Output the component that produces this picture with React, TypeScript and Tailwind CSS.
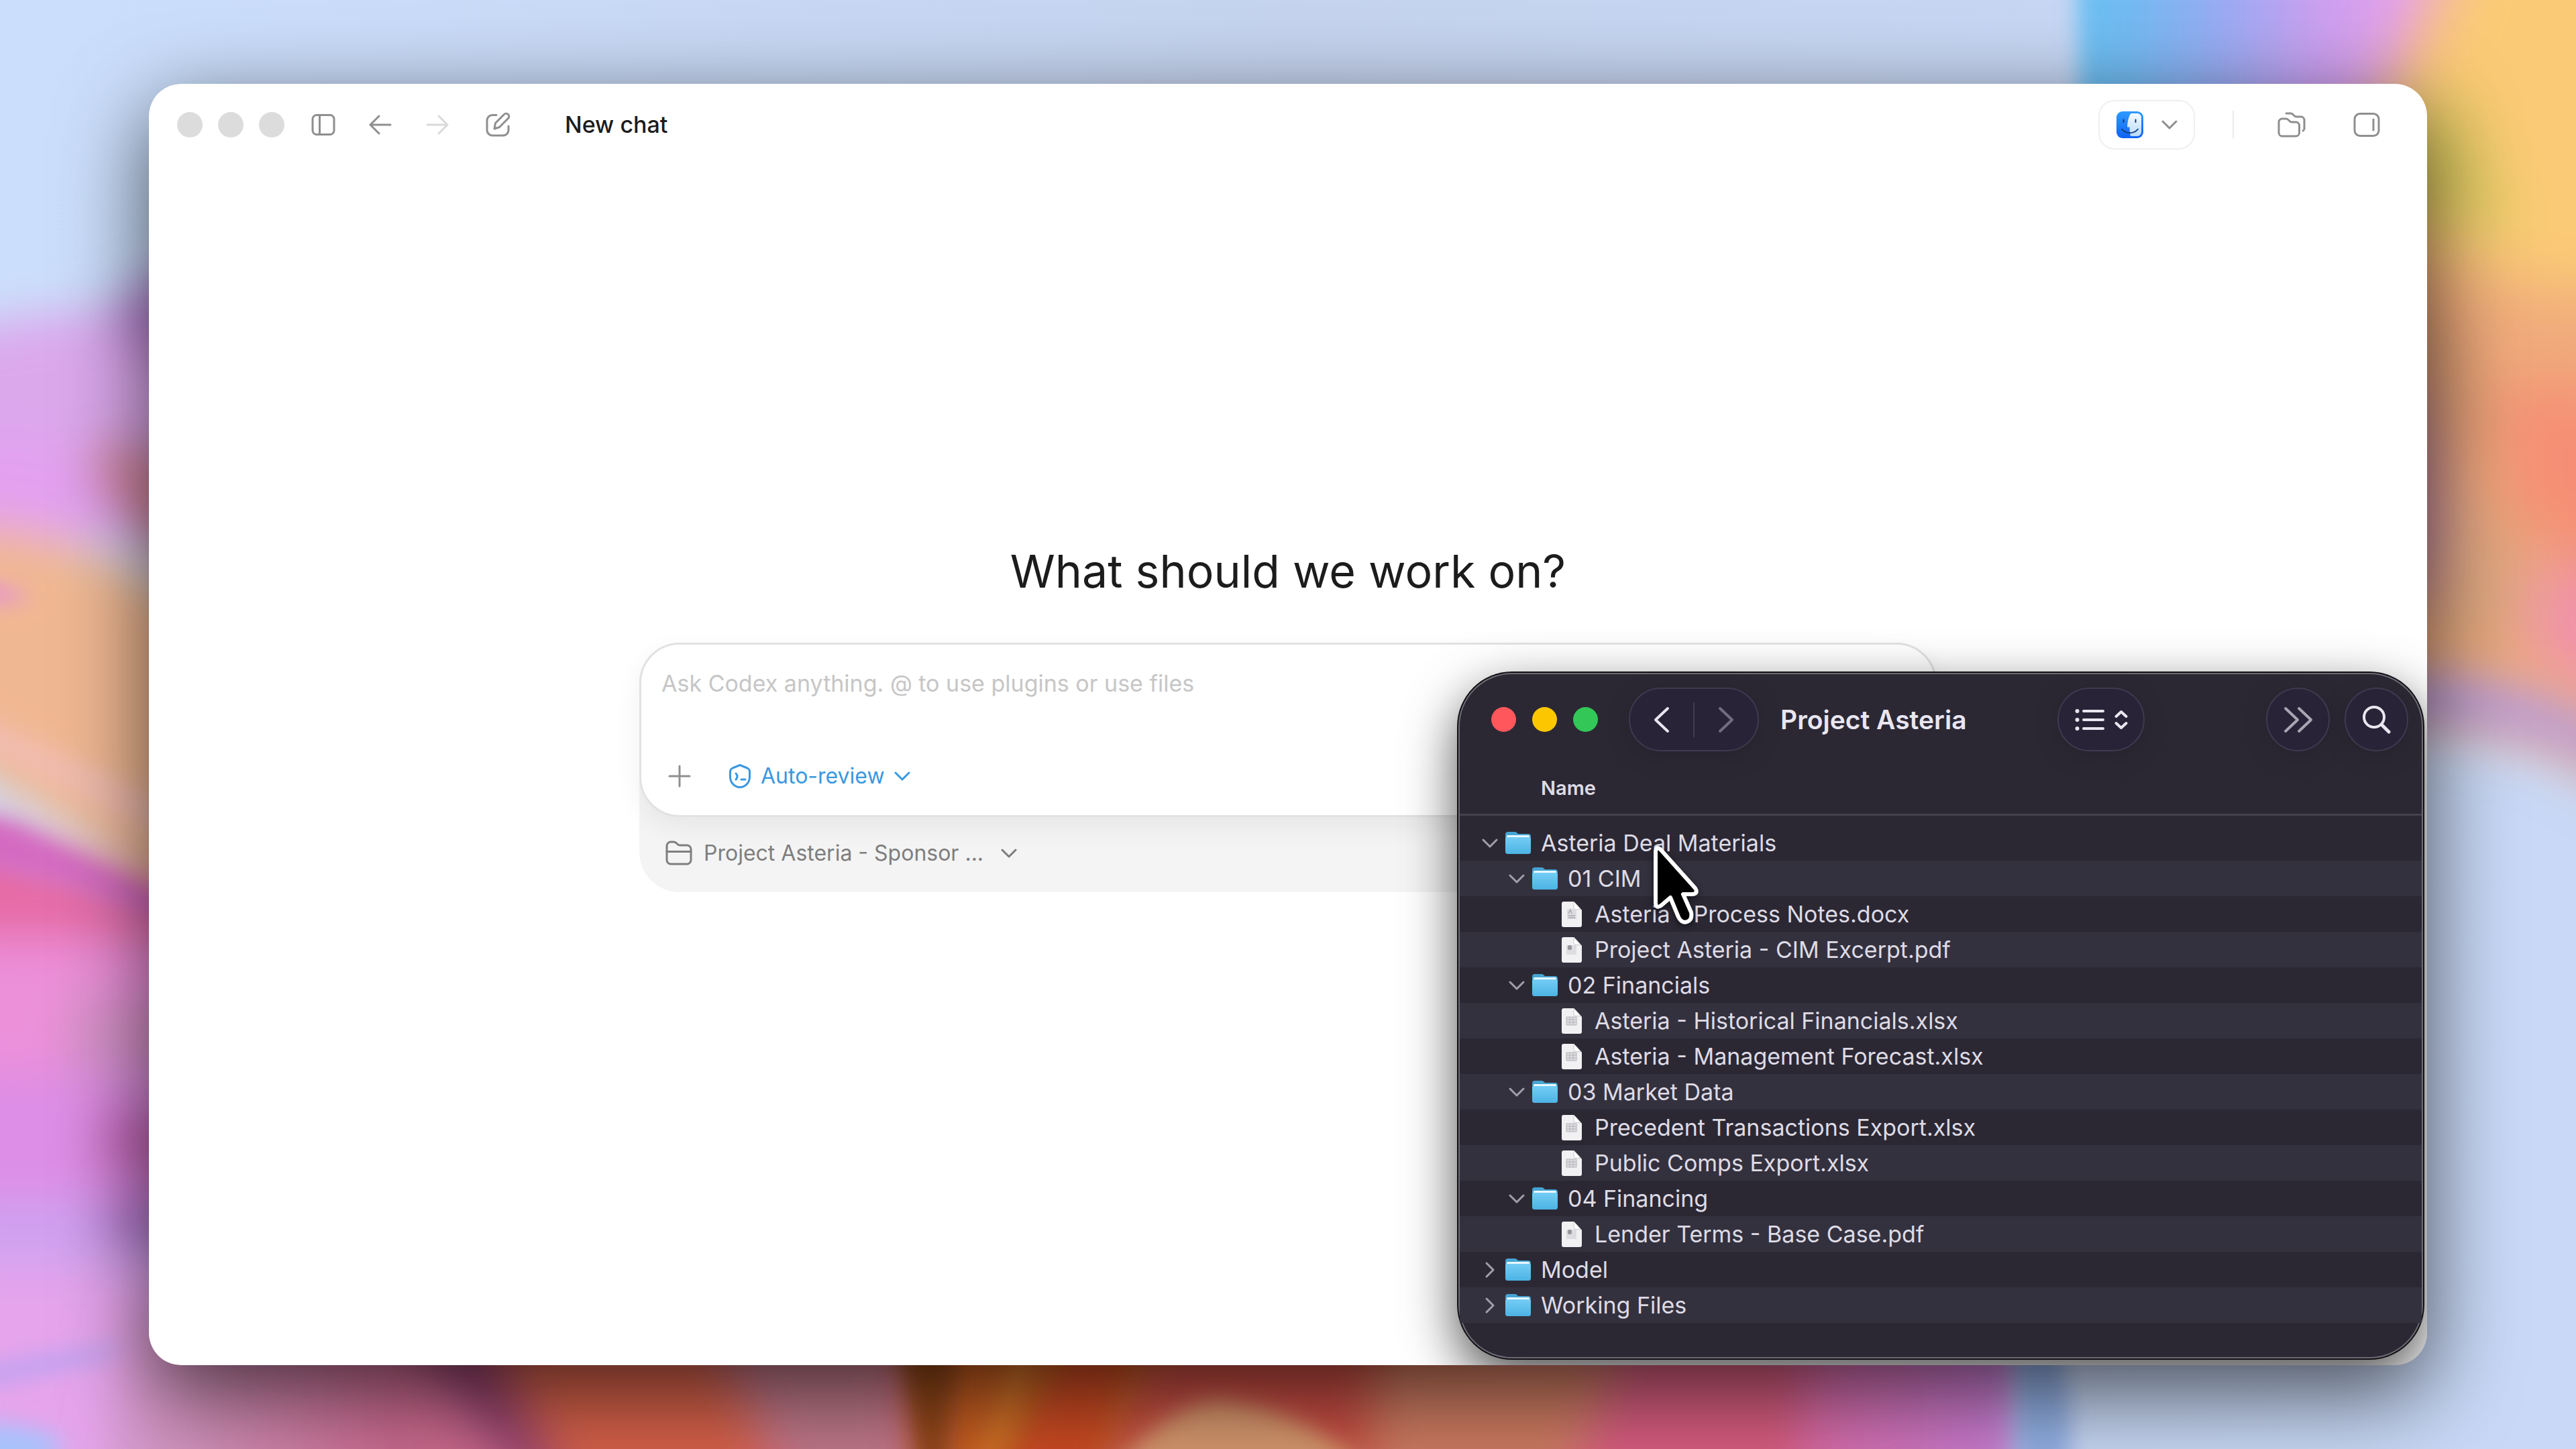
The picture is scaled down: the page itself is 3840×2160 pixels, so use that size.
import { useState } from 'react';
import type { ReactNode } from 'react';

type RowKind = 'folder' | 'doc' | 'pdf' | 'sheet';

interface FileRow {
  name: string;
  kind: RowKind;
  level: 0 | 1 | 2;
  open?: boolean;
}

const rows: FileRow[] = [
  { name: 'Asteria Deal Materials', kind: 'folder', level: 0, open: true },
  { name: '01 CIM', kind: 'folder', level: 1, open: true },
  { name: 'Asteria - Process Notes.docx', kind: 'doc', level: 2 },
  { name: 'Project Asteria - CIM Excerpt.pdf', kind: 'pdf', level: 2 },
  { name: '02 Financials', kind: 'folder', level: 1, open: true },
  { name: 'Asteria - Historical Financials.xlsx', kind: 'sheet', level: 2 },
  { name: 'Asteria - Management Forecast.xlsx', kind: 'sheet', level: 2 },
  { name: '03 Market Data', kind: 'folder', level: 1, open: true },
  { name: 'Precedent Transactions Export.xlsx', kind: 'sheet', level: 2 },
  { name: 'Public Comps Export.xlsx', kind: 'sheet', level: 2 },
  { name: '04 Financing', kind: 'folder', level: 1, open: true },
  { name: 'Lender Terms - Base Case.pdf', kind: 'pdf', level: 2 },
  { name: 'Model', kind: 'folder', level: 0, open: false },
  { name: 'Working Files', kind: 'folder', level: 0, open: false },
];

const indent = ['pl-[25px]', 'pl-[65px]', 'pl-[105px]'];

const Wallpaper = () => (
  <svg
    className="absolute inset-0 h-full w-full"
    viewBox="0 0 3840 2160"
    preserveAspectRatio="none"
    aria-hidden="true"
  >
    <defs>
      <filter id="soft" x="-20%" y="-20%" width="140%" height="140%">
        <feGaussianBlur stdDeviation="16" />
      </filter>
      <filter id="softer" x="-30%" y="-30%" width="160%" height="160%">
        <feGaussianBlur stdDeviation="34" />
      </filter>
      <filter id="softest" x="-50%" y="-30%" width="200%" height="160%">
        <feGaussianBlur stdDeviation="44" />
      </filter>
      <linearGradient id="sky" x1="0" y1="0" x2="1" y2="0">
        <stop offset="0" stopColor="#cbdffc" />
        <stop offset="0.5" stopColor="#c5d3ee" />
        <stop offset="1" stopColor="#c8d8f6" />
      </linearGradient>
      <linearGradient id="topPetal" gradientUnits="userSpaceOnUse" x1="3090" y1="0" x2="3640" y2="0">
        <stop offset="0" stopColor="#69c0f2" />
        <stop offset="0.15" stopColor="#72baf2" />
        <stop offset="0.4" stopColor="#98abf3" />
        <stop offset="0.65" stopColor="#c8a0f0" />
        <stop offset="0.9" stopColor="#e4a0ec" />
        <stop offset="1" stopColor="#e8a8dc" />
      </linearGradient>
      <linearGradient id="bottomPetals" gradientUnits="userSpaceOnUse" x1="60" y1="0" x2="3010" y2="0">
        <stop offset="0" stopColor="#dca4e6" />
        <stop offset="0.08" stopColor="#cf90b8" />
        <stop offset="0.18" stopColor="#c8688c" />
        <stop offset="0.7" stopColor="#d86c72" />
        <stop offset="0.88" stopColor="#d868a0" />
        <stop offset="1" stopColor="#c47cd4" />
      </linearGradient>
    </defs>
    <rect width="3840" height="2160" fill="url(#sky)" />

    {/* Left petals */}
    <g filter="url(#softer)">
      <path d="M-80 500 Q100 440 400 480 V800 H-80Z" fill="#dba8ec" />
      <path d="M170 460 Q220 400 400 380 V640 Q260 560 150 470Z" fill="#b880d2" />
      <path d="M-80 650 L60 650 L220 740 V800 H-80Z" fill="#e3a0f0" />
      <path d="M-80 790 Q120 750 400 1000 V1420 L-80 1120Z" fill="#f0b892" />
      <path d="M150 660 Q260 650 400 760 V960 Q260 860 130 700Z" fill="#d4869a" />
      <path d="M-80 1220 L400 1370 V1480 L-80 1480Z" fill="#e66aa4" />
      <path d="M-80 1400 H400 V1640 H-80Z" fill="#ec90da" />
      <path d="M100 1480 L400 1530 V1640 L100 1600Z" fill="#d692c8" />
      <path d="M-80 1600 H400 V1800 H-80Z" fill="#dd8ee6" />
      <path d="M150 1650 H400 V1800 L140 1740Z" fill="#c568b8" />
      <path d="M-80 1790 H400 V1900 H-80Z" fill="#cfa2f0" />
      <path d="M150 1790 H400 V1850 H150Z" fill="#aa70c4" />
      <path d="M-80 1890 H300 V2220 H-80Z" fill="#e6a4ec" />
    </g>
    <g filter="url(#soft)">
      <path d="M-40 868 Q10 874 50 892 Q0 900 -40 896Z" fill="#e58ce0" />
      <path d="M-40 1060 L260 1200 L260 1260 L-40 1110Z" fill="#f1bcae" />
      <path d="M-40 1215 L20 1225 L260 1345 L260 1380 L100 1320 L-40 1290Z" fill="#d46ac2" />
    </g>

    {/* Bottom petals */}
    <g filter="url(#softer)">
      <path d="M200 1960 H3020 V2260 H140Z" fill="url(#bottomPetals)" />
      <path d="M600 1980 L740 1980 L880 2240 L800 2240Z" fill="#8c3e6c" />
      <path d="M720 1980 H1100 L1160 2240 H860Z" fill="#d46048" />
      <path d="M1060 1980 H1330 L1360 2240 H1200Z" fill="#bd7788" />
      <path d="M1350 1960 H1760 L1660 2240 H1380Z" fill="#c45c24" />
      <path d="M1740 1960 H2200 L2100 2240 H1620Z" fill="#c44c42" />
      <path d="M2060 2000 H2460 L2330 2240 H2040Z" fill="#cc7a60" />
      <path d="M2440 1960 H2700 L2680 2240 H2320Z" fill="#d65c7e" />
    </g>
    <g filter="url(#soft)">
      <path d="M-40 2040 Q60 2020 190 2000 L150 2030 L-40 2070Z" fill="#bda2f0" />
      <path d="M-40 2120 Q40 2120 100 2150 L60 2190 H-40Z" fill="#a8c2fc" />
      <path d="M1340 1980 H1430 L1410 2200 H1370Z" fill="#8e4418" />
      <path d="M1520 1980 L1560 1980 L1480 2200 H1450Z" fill="#cf7228" />
      <path d="M1610 1980 H1700 L1620 2200 H1500Z" fill="#c84a20" />
      <path d="M1650 2200 Q1760 2070 1840 2090 Q1960 2110 2050 2200Z" fill="#d3966c" />
      <path d="M3005 1980 H3060 Q3100 2100 3080 2200 H3005Z" fill="#90aee2" />
    </g>

    {/* Right petals */}
    <g filter="url(#soft)">
      <path d="M3095 -60 H3700 V300 H3105Z" fill="url(#topPetal)" />
    </g>
    <g filter="url(#softest)">
      <path d="M3620 -120 H3960 V1210 Q3800 1060 3500 1070 V340 Q3500 180 3660 -40Z" fill="#f0ab7c" />
      <path d="M3680 -120 H3960 V420 Q3760 460 3560 340 V200Z" fill="#fbca76" />
      <path d="M3540 200 Q3620 90 3690 190 L3750 350 L3540 330Z" fill="#dcca60" />
      <path d="M3540 420 Q3680 430 3700 640 L3640 760 H3540Z" fill="#d49870" />
      <path d="M3500 500 Q3640 560 3640 900 H3500Z" fill="#bd80a4" />
      <path d="M3720 580 Q3860 540 3960 640 V900 L3740 780Z" fill="#f58e74" />
      <path d="M3640 740 Q3740 720 3780 860 L3740 980 H3600Z" fill="#dea77e" />
      <path d="M3770 860 L3960 840 V1080 L3780 980Z" fill="#f190ac" />
    </g>
    <g filter="url(#softer)">
      <path d="M3500 1010 Q3740 980 3940 1120 V1180 Q3760 1050 3500 1080Z" fill="#b497de" />
    </g>
  </svg>
);

const ChevronDown = ({ className }: { className: string }) => (
  <svg className={className} viewBox="0 0 24 14" fill="none" stroke="currentColor" strokeWidth="3" strokeLinecap="round" strokeLinejoin="round" aria-hidden="true">
    <path d="M2 2l10 10L22 2" />
  </svg>
);

const ChevronRight = ({ className }: { className: string }) => (
  <svg className={className} viewBox="0 0 14 24" fill="none" stroke="currentColor" strokeWidth="3" strokeLinecap="round" strokeLinejoin="round" aria-hidden="true">
    <path d="M2 2l10 10L2 22" />
  </svg>
);

const FolderIcon = () => (
  <svg className="h-[34px] w-[38px]" viewBox="0 0 38 34" aria-hidden="true">
    <defs>
      <linearGradient id="folderFront" x1="0" y1="0" x2="0" y2="1">
        <stop offset="0" stopColor="#74cdf5" />
        <stop offset="1" stopColor="#4cb3e4" />
      </linearGradient>
    </defs>
    <path d="M0 4a4 4 0 0 1 4-4h10c1.500 0 2.500.6 3.500 1.600L19 3h15a4 4 0 0 1 4 4v22a4 4 0 0 1-4 4H4a4 4 0 0 1-4-4z" fill="#46a5d3" />
    <rect x="2" y="5" width="34" height="6" rx="1.500" fill="#e8f8ff" />
    <path d="M0 10.500C0 9 1 8 2.500 8h33C37 8 38 9 38 10.500V29a4 4 0 0 1-4 4H4a4 4 0 0 1-4-4z" fill="url(#folderFront)" />
  </svg>
);

const FileIcon = ({ kind }: { kind: RowKind }) => (
  <svg className="h-[38px] w-[30px]" viewBox="0 0 30 38" aria-hidden="true">
    <path d="M0 3a3 3 0 0 1 3-3h15l12 13v22a3 3 0 0 1-3 3H3a3 3 0 0 1-3-3z" fill="#f1f0f2" />
    <path d="M18 0l12 13c-1-1-2-1.500-4-1.500h-5a3 3 0 0 1-3-3z" fill="#fff" stroke="#c9c8cc" strokeWidth="1" />
    {kind === 'sheet' && (
      <path d="M7 13h15v12H7zM7 17h15M7 21h15M12 13v12M17 13v12" fill="#dedde0" stroke="#b4b3b8" strokeWidth="1" />
    )}
    {kind === 'pdf' && (
      <>
        <rect x="7" y="12" width="15" height="14" fill="#dddce0" />
        <rect x="9" y="12" width="6" height="7" rx="2" fill="#98979c" />
      </>
    )}
    {kind === 'doc' && (
      <>
        <rect x="8" y="11" width="14" height="15" fill="#dddce0" />
        <path d="M10 18l3-6 2 6M10 21h10M10 24h10" fill="none" stroke="#a9a8ad" strokeWidth="1.500" />
      </>
    )}
  </svg>
);

const FinderFace = () => (
  <svg className="h-[40px] w-[40px]" viewBox="0 0 40 40" aria-hidden="true">
    <defs>
      <linearGradient id="faceDark" x1="0" y1="0" x2="0" y2="1">
        <stop offset="0" stopColor="#2f9bff" />
        <stop offset="1" stopColor="#0f62f5" />
      </linearGradient>
      <linearGradient id="faceLight" x1="0" y1="0" x2="0" y2="1">
        <stop offset="0" stopColor="#f6fbff" />
        <stop offset="1" stopColor="#b9d9fb" />
      </linearGradient>
    </defs>
    <rect width="40" height="40" rx="9" fill="url(#faceDark)" />
    <path d="M21.500 3H31a6 6 0 0 1 6 6v22a6 6 0 0 1-6 6H21c-1-4-1.500-8-1.500-13.500H16C16.500 15 18 8 21.500 3z" fill="url(#faceLight)" />
    <path d="M10.500 12.500v3.500M28.500 12.500v3.500" stroke="#12386e" strokeWidth="2" strokeLinecap="round" />
    <path d="M8 26.500c6 7.500 18 7.500 24 0" fill="none" stroke="#12386e" strokeWidth="1.800" strokeLinecap="round" />
  </svg>
);

const Cursor = () => (
  <svg
    className="pointer-events-none absolute top-[252px] left-[280px] h-[130px] w-[90px] drop-shadow-[0_4px_5px_rgba(0,0,0,0.5)]"
    viewBox="0 0 90 130"
    aria-hidden="true"
  >
    <path
      d="M12 12V88q0 10 8 5l14-12 12 29q5 10 13 7t6-14L53 76h14q9-1 4-9L19 9q-6-5-7 3z"
      fill="#000"
      stroke="#fff"
      strokeWidth="6"
      strokeLinejoin="round"
    />
  </svg>
);

const IconButton = ({ label, children }: { label: string; children: ReactNode }) => (
  <button type="button" aria-label={label} className="flex h-[60px] w-[60px] items-center justify-center">
    {children}
  </button>
);

const TitleBar = () => (
  <header className="flex h-[122px] shrink-0 items-center pr-[60px] pl-[42px] text-[#8f8f8f]">
    <div className="flex gap-[23px]">
      <button type="button" aria-label="Close" className="h-[38px] w-[38px] rounded-full bg-[#dcdcdc]" />
      <button type="button" aria-label="Minimize" className="h-[38px] w-[38px] rounded-full bg-[#dcdcdc]" />
      <button type="button" aria-label="Zoom" className="h-[38px] w-[38px] rounded-full bg-[#dcdcdc]" />
    </div>
    <nav className="ml-[28px] flex gap-[25px]">
      <IconButton label="Toggle sidebar">
        <svg className="h-[36px] w-[36px]" viewBox="0 0 36 36" fill="none" stroke="currentColor" strokeWidth="3">
          <rect x="2" y="3.500" width="32" height="29" rx="6" />
          <path d="M12.500 4v28" />
        </svg>
      </IconButton>
      <IconButton label="Back">
        <svg className="h-[32px] w-[34px]" viewBox="0 0 34 32" fill="none" stroke="currentColor" strokeWidth="3" strokeLinecap="round" strokeLinejoin="round">
          <path d="M15 3L2 16l13 13M2 16h30" />
        </svg>
      </IconButton>
      <IconButton label="Forward">
        <svg className="h-[32px] w-[34px] text-[#dadada]" viewBox="0 0 34 32" fill="none" stroke="currentColor" strokeWidth="3" strokeLinecap="round" strokeLinejoin="round">
          <path d="M19 3l13 13-13 13M32 16H2" />
        </svg>
      </IconButton>
    </nav>
    <div className="ml-[30px] flex items-center gap-[70px]">
      <IconButton label="New chat">
        <svg className="h-[38px] w-[38px]" viewBox="0 0 38 38" fill="none" stroke="currentColor" strokeWidth="3" strokeLinecap="round" strokeLinejoin="round">
          <path d="M17 4.500h-6a8 8 0 0 0-8 8V27a8 8 0 0 0 8 8h16a8 8 0 0 0 8-8v-6" />
          <path d="M14 25l1.500-8.500L28.500 3.500a4.200 4.200 0 0 1 6 6L21.500 22.500z" />
        </svg>
      </IconButton>
      <h1 className="text-[34px] leading-[44px] font-medium text-[#1c1c1c]">New chat</h1>
    </div>
    <button
      type="button"
      aria-label="Open in Finder"
      className="ml-auto flex h-[74px] w-[144px] items-center justify-center gap-[27px] rounded-[24px] border-[2px] border-[#efefef]"
    >
      <FinderFace />
      <ChevronDown className="h-[14px] w-[24px]" />
    </button>
    <div className="mx-[56px] h-[42px] w-[2px] bg-[#ececec]" />
    <div className="flex gap-[52px]">
      <IconButton label="Open files">
        <svg className="h-[40px] w-[44px]" viewBox="0 0 44 40" fill="none" stroke="currentColor" strokeWidth="3" strokeLinecap="round" strokeLinejoin="round">
          <path d="M3 16a5 5 0 0 1 5-5h5.500c1.500 0 2.500.5 3.500 1.500l2 2c1 1 1.500 1.500 3 1.500h6.500a5 5 0 0 1 5 5v11a5 5 0 0 1-5 5H8a5 5 0 0 1-5-5z" />
          <path d="M14 3h6.500c1.500 0 2.500.5 3.500 1.500l2 2c1 1 1.500 1.500 3 1.500h7a5 5 0 0 1 5 5v13a5 5 0 0 1-2 3" />
        </svg>
      </IconButton>
      <IconButton label="Toggle side panel">
        <svg className="h-[40px] w-[40px]" viewBox="0 0 40 40" fill="none" stroke="currentColor" strokeWidth="3" strokeLinecap="round">
          <rect x="2" y="3.500" width="36" height="33" rx="8" />
          <path d="M30 12v16" />
        </svg>
      </IconButton>
    </div>
  </header>
);

const Composer = () => {
  const [prompt, setPrompt] = useState('');

  return (
    <div className="w-full max-w-[1934px] rounded-[60px] bg-[#f4f4f4]">
      <form className="flex flex-col rounded-[60px] border-[3px] border-[#e2e2e2] bg-white px-[30px] pt-[36px] pb-[28px] shadow-[0_14px_40px_rgba(0,0,0,0.06)]">
        <textarea
          aria-label="Message"
          rows={2}
          value={prompt}
          onChange={(e) => setPrompt(e.target.value)}
          placeholder="Ask Codex anything. @ to use plugins or use files"
          className="h-[130px] w-full resize-none text-[34px] leading-[44px] text-[#1c1c1c] outline-none placeholder:text-[#c6c6c6]"
        />
        <div className="flex h-[60px] items-center gap-[46px]">
          <button type="button" aria-label="Add attachment" className="flex h-[60px] w-[54px] items-center justify-center text-[#8f8f8f]">
            <svg className="h-[34px] w-[34px]" viewBox="0 0 34 34" fill="none" stroke="currentColor" strokeWidth="3" strokeLinecap="round">
              <path d="M17 2v30M2 17h30" />
            </svg>
          </button>
          <button type="button" className="flex items-center gap-[14px] text-[32px] leading-[44px] text-[#3a98e0]">
            <svg className="h-[38px] w-[34px]" viewBox="0 0 34 38" fill="none" stroke="currentColor" strokeWidth="3" strokeLinecap="round" strokeLinejoin="round" aria-hidden="true">
              <path d="M17 2.500l11 4.500c2 1 3.500 2.500 3.500 5v8c0 9-7 15.500-14.500 15.500S2.500 29 2.500 20v-8c0-2.500 1.500-4 3.500-5z" />
              <path d="M11 15c2.500 2.500 2.500 6 0 9M19 24h6" />
            </svg>
            Auto-review
            <ChevronDown className="h-[14px] w-[24px]" />
          </button>
        </div>
      </form>
      <div className="flex h-[112px] items-center px-[38px] pb-[4px]">
        <button type="button" className="flex items-center gap-[16px] text-[32px] leading-[44px] text-[#7e7e7e]">
          <svg className="h-[38px] w-[42px]" viewBox="0 0 42 38" fill="none" stroke="currentColor" strokeWidth="3" strokeLinecap="round" strokeLinejoin="round" aria-hidden="true">
            <path d="M3 8a6 6 0 0 1 6-6h4c2 0 3 .5 4.500 2l1.500 1.500c1 1 2 1.500 3.500 1.500H33a6 6 0 0 1 6 6v16a6 6 0 0 1-6 6H9a6 6 0 0 1-6-6z" />
            <path d="M3 16.500h36" />
          </svg>
          Project Asteria - Sponsor ...
          <ChevronDown className="ml-[10px] h-[14px] w-[24px]" />
        </button>
      </div>
    </div>
  );
};

const FinderToolbar = () => (
  <div className="flex h-[136px] items-center pr-[20px] pl-[47px] text-[#e9e6f0]">
    <div className="flex gap-[24px]">
      <button type="button" aria-label="Close Finder" className="h-[37px] w-[37px] rounded-full bg-[#ff575c]" />
      <button type="button" aria-label="Minimize Finder" className="h-[37px] w-[37px] rounded-full bg-[#fdc700]" />
      <button type="button" aria-label="Zoom Finder" className="h-[37px] w-[37px] rounded-full bg-[#33c758]" />
    </div>
    <div className="ml-[46px] flex h-[95px] w-[194px] items-center rounded-full border-[2px] border-[#3f3a4f] bg-[#282337] shadow-[0_8px_40px_rgba(0,0,0,0.12)]">
      <button type="button" aria-label="Previous folder" className="flex h-full flex-1 items-center justify-center">
        <svg className="h-[40px] w-[24px]" viewBox="0 0 24 40" fill="none" stroke="currentColor" strokeWidth="4" strokeLinecap="round" strokeLinejoin="round">
          <path d="M21 3L3 20l18 17" />
        </svg>
      </button>
      <div className="h-[52px] w-[2px] bg-[#3f3b4c]" />
      <button type="button" aria-label="Next folder" className="flex h-full flex-1 items-center justify-center text-[#716d7e]">
        <svg className="h-[40px] w-[24px]" viewBox="0 0 24 40" fill="none" stroke="currentColor" strokeWidth="4" strokeLinecap="round" strokeLinejoin="round">
          <path d="M3 3l18 17L3 37" />
        </svg>
      </button>
    </div>
    <h2 className="ml-[32px] text-[39px] leading-[48px] font-semibold whitespace-nowrap">Project Asteria</h2>
    <button
      type="button"
      aria-label="View as list"
      className="ml-auto flex h-[95px] w-[130px] items-center justify-center gap-[14px] rounded-full border-[2px] border-[#3f3a4f] bg-[#282337] shadow-[0_8px_40px_rgba(0,0,0,0.12)]"
    >
      <svg className="h-[34px] w-[45px]" viewBox="0 0 45 34" fill="none" stroke="currentColor" strokeWidth="4" strokeLinecap="round">
        <path d="M13 4h29M13 17h29M13 30h29" />
        <path d="M3.500 4h.01M3.500 17h.01M3.500 30h.01" strokeWidth="6" />
      </svg>
      <svg className="h-[30px] w-[20px]" viewBox="0 0 20 30" fill="none" stroke="currentColor" strokeWidth="4" strokeLinecap="round" strokeLinejoin="round">
        <path d="M2.500 10L10 3l7.500 7M2.500 20l7.500 7 7.500-7" />
      </svg>
    </button>
    <button
      type="button"
      aria-label="More toolbar items"
      className="ml-[181px] flex h-[95px] w-[95px] items-center justify-center rounded-full border-[2px] border-[#3f3a4f] bg-[#282337] text-[#a9a6b3] shadow-[0_8px_40px_rgba(0,0,0,0.12)]"
    >
      <svg className="h-[40px] w-[44px]" viewBox="0 0 44 40" fill="none" stroke="currentColor" strokeWidth="4" strokeLinecap="round" strokeLinejoin="round">
        <path d="M3 3l18 17L3 37M23 3l18 17-18 17" />
      </svg>
    </button>
    <button
      type="button"
      aria-label="Search"
      className="ml-[22px] flex h-[95px] w-[95px] items-center justify-center rounded-full border-[2px] border-[#3f3a4f] bg-[#282337] shadow-[0_8px_40px_rgba(0,0,0,0.12)]"
    >
      <svg className="h-[44px] w-[44px]" viewBox="0 0 44 44" fill="none" stroke="currentColor" strokeWidth="4" strokeLinecap="round">
        <circle cx="18" cy="18" r="15" />
        <path d="M29 29l11 11" strokeWidth="5" />
      </svg>
    </button>
  </div>
);

const FinderWindow = () => (
  <section
    aria-label="Project Asteria"
    className="absolute right-[6px] bottom-[10px] w-[1438px] rounded-[80px] border-[2px] border-[#6d6b73] bg-[#2b2834] shadow-[0_0_0_2px_#121116,0_30px_80px_rgba(0,0,0,0.7)]"
  >
    <FinderToolbar />
    <table className="w-full border-collapse text-left text-[#dedbe5]">
      <thead>
        <tr>
          <th scope="col" className="h-[74px] border-b-[3px] border-[#45424e] pt-0 pb-[4px] pl-[121px] text-[29px] leading-[40px] font-semibold">
            Name
          </th>
        </tr>
      </thead>
      <tbody className="before:block before:h-[14px] before:content-['']">
        {rows.map((row) => (
          <tr key={row.name} className="even:bg-[#34313e]">
            <td className="p-0">
              <div className={`flex h-[53px] items-center ${indent[row.level]}`}>
                {row.kind === 'folder' ? (
                  <button
                    type="button"
                    aria-label={`Toggle ${row.name}`}
                    aria-expanded={row.open}
                    className="flex h-full w-[40px] items-center justify-center text-[#a19eab]"
                  >
                    {row.open ? <ChevronDown className="h-[14px] w-[24px]" /> : <ChevronRight className="h-[24px] w-[14px]" />}
                  </button>
                ) : (
                  <span className="w-[40px]" />
                )}
                <span className="flex w-[44px] justify-center">
                  {row.kind === 'folder' ? <FolderIcon /> : <FileIcon kind={row.kind} />}
                </span>
                <span className="ml-[12px] text-[34px] leading-[44px] whitespace-nowrap">{row.name}</span>
              </div>
            </td>
          </tr>
        ))}
      </tbody>
    </table>
    <div className="h-[51px]" />
    <Cursor />
  </section>
);

const App = () => {
  return (
    <div className="relative flex min-h-screen flex-col overflow-hidden bg-[#c6d5f0] px-[222px] py-[125px] font-['Inter','Liberation_Sans',sans-serif]">
      <Wallpaper />
      <div className="relative flex flex-1 flex-col overflow-hidden rounded-[48px] bg-white shadow-[0_40px_130px_rgba(0,0,0,0.65)]">
        <TitleBar />
        <main className="flex flex-1 flex-col items-center justify-center px-[60px] pb-[145px]">
          <h2 className="mb-[63px] text-[68px] leading-[88px] text-[#1c1c1c]">What should we work on?</h2>
          <Composer />
        </main>
        <FinderWindow />
      </div>
    </div>
  );
};

export default App;
